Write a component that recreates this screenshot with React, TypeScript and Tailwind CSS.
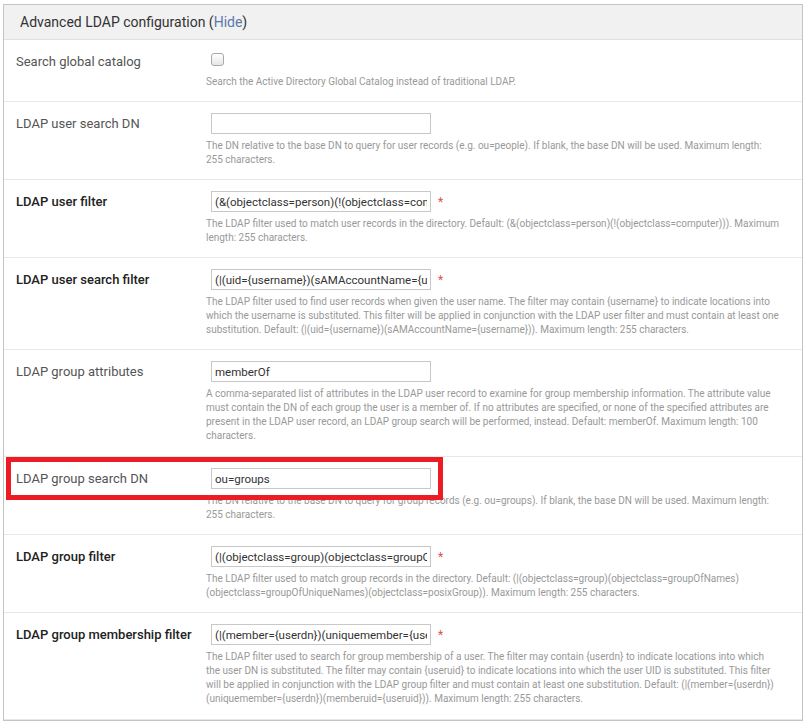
import React from 'react';

type Field = {
  label: string;
  required?: boolean;
  kind: 'checkbox' | 'text';
  value?: string;
  help: string[];
};

const fields: Field[] = [
  {
    label: 'Search global catalog',
    kind: 'checkbox',
    help: ['Search the Active Directory Global Catalog instead of traditional LDAP.'],
  },
  {
    label: 'LDAP user search DN',
    kind: 'text',
    value: '',
    help: [
      'The DN relative to the base DN to query for user records (e.g. ou=people). If blank, the base DN will be used. Maximum length:',
      '255 characters.',
    ],
  },
  {
    label: 'LDAP user filter',
    required: true,
    kind: 'text',
    value: '(&(objectclass=person)(!(objectclass=computer)))',
    help: [
      'The LDAP filter used to match user records in the directory. Default: (&(objectclass=person)(!(objectclass=computer))). Maximum',
      'length: 255 characters.',
    ],
  },
  {
    label: 'LDAP user search filter',
    required: true,
    kind: 'text',
    value: '(|(uid={username})(sAMAccountName={username}))',
    help: [
      'The LDAP filter used to find user records when given the user name. The filter may contain {username} to indicate locations into',
      'which the username is substituted. This filter will be applied in conjunction with the LDAP user filter and must contain at least one',
      'substitution. Default: (|(uid={username})(sAMAccountName={username})). Maximum length: 255 characters.',
    ],
  },
  {
    label: 'LDAP group attributes',
    kind: 'text',
    value: 'memberOf',
    help: [
      'A comma-separated list of attributes in the LDAP user record to examine for group membership information. The attribute value',
      'must contain the DN of each group the user is a member of. If no attributes are specified, or none of the specified attributes are',
      'present in the LDAP user record, an LDAP group search will be performed, instead. Default: memberOf. Maximum length: 100',
      'characters.',
    ],
  },
  {
    label: 'LDAP group search DN',
    kind: 'text',
    value: 'ou=groups',
    help: [
      'The DN relative to the base DN to query for group records (e.g. ou=groups). If blank, the base DN will be used. Maximum length:',
      '255 characters.',
    ],
  },
  {
    label: 'LDAP group filter',
    required: true,
    kind: 'text',
    value: '(|(objectclass=group)(objectclass=groupOfNames)(objectclass=groupOfUniqueNames)(objectclass=posixGroup))',
    help: [
      'The LDAP filter used to match group records in the directory. Default: (|(objectclass=group)(objectclass=groupOfNames)',
      '(objectclass=groupOfUniqueNames)(objectclass=posixGroup)). Maximum length: 255 characters.',
    ],
  },
  {
    label: 'LDAP group membership filter',
    required: true,
    kind: 'text',
    value: '(|(member={userdn})(uniquemember={userdn})(memberuid={useruid}))',
    help: [
      'The LDAP filter used to search for group membership of a user. The filter may contain {userdn} to indicate locations into which',
      'the user DN is substituted. The filter may contain {useruid} to indicate locations into which the user UID is substituted. This filter',
      'will be applied in conjunction with the LDAP group filter and must contain at least one substitution. Default: (|(member={userdn})',
      '(uniquemember={userdn})(memberuid={useruid})). Maximum length: 255 characters.',
    ],
  },
];

function Row({ field, tall }: { field: Field; tall?: boolean }) {
  return (
    <div
      className={`grid grid-cols-[190px_1fr] border-b border-[#e8e8e8] pl-[12px] pr-[14px] pt-[11px] last:border-b-0 ${
        tall ? 'pb-[13px]' : 'pb-[12px]'
      }`}
    >
      <div
        className={`text-[13px] leading-[21px] ${
          field.required ? 'font-medium text-[#222]' : 'text-[#555]'
        }`}
      >
        {field.label}
      </div>
      <div>
        {field.kind === 'checkbox' ? (
          <div className="flex h-[19px] items-start pl-[5px] pt-[2px]">
            <span className="block h-[13px] w-[13px] rounded-[3px] border border-[#a9a9a9] bg-gradient-to-b from-white to-[#e6e6e6]" />
          </div>
        ) : (
          <div className="flex items-center">
            <input
              readOnly
              defaultValue={field.value}
              className="ml-[5px] h-[21px] w-[220px] border border-[#c8c8c8] bg-white px-[3px] text-[11.5px] text-[#333] outline-none"
            />
            {field.required && <span className="ml-[7px] text-[12px] leading-none text-[#d9534f]">*</span>}
          </div>
        )}
        <div className="mt-[5px] text-[10px] leading-[14px] text-[#999]">
          {field.help.map((line, i) => (
            <div key={i} className="whitespace-nowrap">
              {line}
            </div>
          ))}
        </div>
      </div>
    </div>
  );
}

export default function App() {
  return (
    <div className="min-h-screen bg-white pl-[3px] pt-[4px]" style={{ fontFamily: 'Roboto, "Liberation Sans", sans-serif' }}>
      <div className="relative w-[800px] border border-[#c4c4c4]">
        {/* Header */}
        <div className="flex h-[35px] items-center border-b border-[#e0e0e0] bg-[#f1f1f1] pl-[16px] text-[14px] text-[#333]">
          Advanced LDAP configuration&nbsp;<span className="text-[#333]">(</span>
          <span className="text-[#5b78ad]">Hide</span>
          <span>)</span>
        </div>

        {fields.map((f) => (
          <Row key={f.label} field={f} tall={f.help.length === 4} />
        ))}

        {/* highlight */}
        <div className="pointer-events-none absolute left-[2px] top-[452px] h-[43px] w-[437px] border-[5px] border-[#ed1c24]" />
      </div>
    </div>
  );
}
